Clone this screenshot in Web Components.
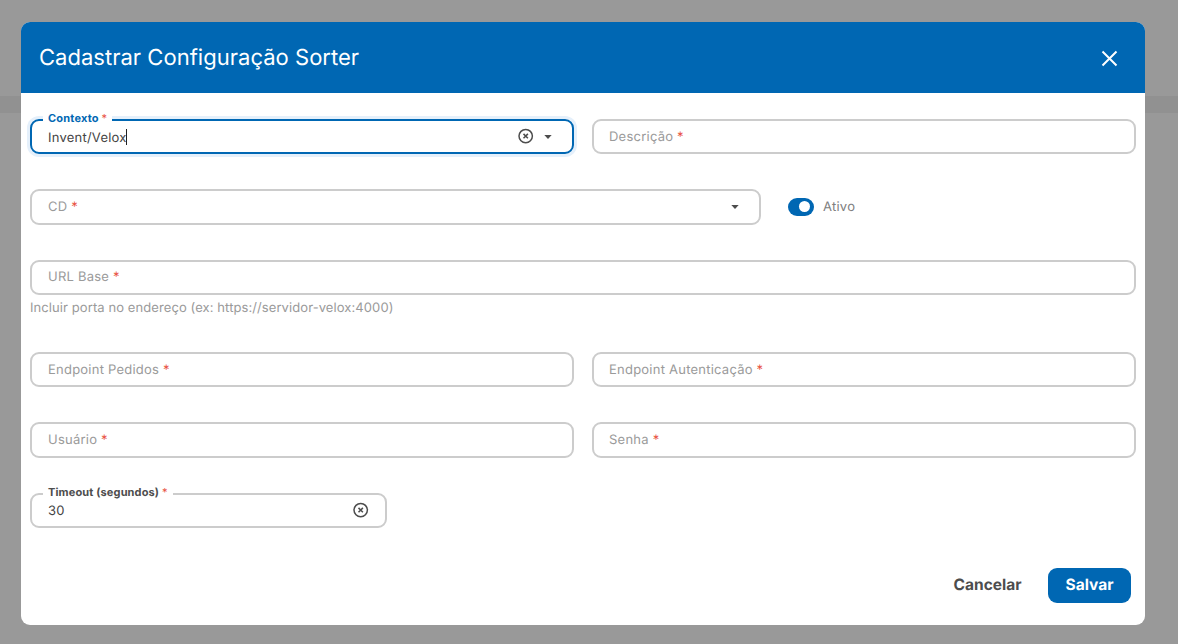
<!DOCTYPE html>
<html lang="pt-BR">
<head>
<meta charset="utf-8">
<title>Cadastrar Configuração Sorter</title>
<style>
html,body{margin:0;height:100%}
body{font-family:Inter,"Liberation Sans",sans-serif;text-rendering:geometricPrecision;background:linear-gradient(#999 96px,#919191 96px,#919191 113px,#999 113px);overflow:hidden}
.row{display:grid;grid-template-columns:544px 544px;column-gap:18px;align-items:start}
.row form-field:nth-child(2){--pl:15px}
.cd{grid-template-columns:731px auto;column-gap:27px}
.one{grid-template-columns:1106px}
.short{grid-template-columns:357px}
</style>
</head>
<body>
<sorter-dialog>
  <span slot="title">Cadastrar Configuração Sorter</span>
  <div class="row" style="height:70px">
    <form-field label="Contexto" value="Invent/Velox" focused clear select></form-field>
    <form-field label="Descrição"></form-field>
  </div>
  <div class="row cd" style="height:71px">
    <form-field label="CD" select style="--h:36px"></form-field>
    <toggle-switch>Ativo</toggle-switch>
  </div>
  <div class="row one" style="height:92px">
    <form-field label="URL Base" hint="Incluir porta no endereço (ex: https://servidor-velox:4000)" style="--dy:0px"></form-field>
  </div>
  <div class="row" style="height:70px">
    <form-field label="Endpoint Pedidos"></form-field>
    <form-field label="Endpoint Autenticação"></form-field>
  </div>
  <div class="row" style="height:71px">
    <form-field label="Usuário" style="--h:36px"></form-field>
    <form-field label="Senha" style="--h:36px"></form-field>
  </div>
  <div class="row short" style="height:75px">
    <form-field label="Timeout (segundos)" value="30" clear style="--dy:0px;--fls:.14px"></form-field>
  </div>
  <action-button slot="actions">Cancelar</action-button>
  <action-button slot="actions" primary>Salvar</action-button>
</sorter-dialog>
<script>
class SorterDialog extends HTMLElement{
  constructor(){super();this.attachShadow({mode:'open'}).innerHTML=`
<style>
:host{display:block;padding:22px 33px 19px 21px}
.dialog{height:603px;border-radius:9px;background:#fff;overflow:hidden}
header{height:71px;box-sizing:border-box;background:#0067b3;color:#fff;display:flex;align-items:center;justify-content:space-between;padding:0 27px 0 18px}
h1{margin:0;font-size:22px;font-weight:400;line-height:30px;letter-spacing:.02px;white-space:nowrap}
svg{display:block;margin-top:1px}
main{padding:26px 9px 0}
footer{display:flex;justify-content:flex-end;gap:9px;padding-right:14px}
</style>
<div class="dialog"><header><h1><slot name="title"></slot></h1>
<svg width="17" height="17" viewBox="0 0 17 17" stroke="#fff" stroke-width="2"><path d="M1.5 1.5 15.5 15.5M15.5 1.5 1.5 15.5"/></svg></header>
<main><slot></slot></main><footer><slot name="actions"></slot></footer></div>`}
}
class FormField extends HTMLElement{
  connectedCallback(){
    const a=n=>this.getAttribute(n),v=a('value'),f=this.hasAttribute('focused');
    this.attachShadow({mode:'open'}).innerHTML=`
<style>
:host{display:block;font-size:13px;letter-spacing:.23px;color:#9a9a9a}
.box{position:relative;box-sizing:border-box;height:var(--h,35px);border:2px solid #ccc;border-radius:9px;display:flex;align-items:center;padding:0 16px 0 var(--pl,16px)}
:host([focused]) .box{border-color:#0067b3;box-shadow:0 0 0 3px #e5f0fb}
.text{flex:1;display:flex;align-items:center;line-height:18px;white-space:pre;margin-top:-2px;transform:translateY(var(--dy,1px))}
.value{color:#444;margin:0}
b{color:#e8513f;font-weight:400}
.float{position:absolute;left:11px;top:-6px;height:12px;line-height:7px;padding:0 5px;background:#fff;font-size:11px;font-weight:700;color:#4d4d4d;letter-spacing:var(--fls,.2px);white-space:pre}
:host([focused]) .float{color:#0067b3}
.caret{width:1px;height:16px;background:#222;margin-left:-1px;transform:translateY(-1px)}
.arrow{margin:0 4px 0 10px}
.clear{margin-top:-1px}
.hint{line-height:18px;padding-top:4px;letter-spacing:.085px}
svg{display:block;flex:none}
</style>
<div class="box">${v?`<span class="float">${a('label')} <b>*</b></span><span class="text value">${v}${f?'<i class="caret"></i>':''}</span>`
:`<span class="text">${a('label')} <b>*</b></span>`}
${this.hasAttribute('clear')?'<svg class="clear" width="16" height="16" viewBox="0 0 16 16" fill="none" stroke="#4d4d4d" stroke-width="1.5"><circle cx="7.7" cy="8.1" r="6.7"/><path d="M5.5 5.9 9.9 10.3M9.9 5.9 5.5 10.3"/></svg>':''}
${this.hasAttribute('select')?'<svg class="arrow" width="8" height="4" viewBox="0 0 8 4"><path d="M.3 0H7.7L4 4Z" fill="#4d4d4d"/></svg>':''}
</div>${a('hint')?`<div class="hint">${a('hint')}</div>`:''}`}
}
class ToggleSwitch extends HTMLElement{
  constructor(){super();this.attachShadow({mode:'open'}).innerHTML=`
<style>
:host{display:flex;align-items:center;height:36px;gap:9px;font-size:13px;letter-spacing:.24px;color:#808080}
.track{box-sizing:border-box;width:26px;height:18px;border-radius:9px;background:#0067b3;display:flex;justify-content:flex-end;align-items:center;padding-right:4px}
.thumb{width:11px;height:11px;border-radius:50%;background:#fff;margin-top:-1px}
.label{margin-top:0;transform:translateY(-.1px)}
</style><span class="track"><span class="thumb"></span></span><span class="label"><slot></slot></span>`}
}
class ActionButton extends HTMLElement{
  constructor(){super();this.attachShadow({mode:'open'}).innerHTML=`
<style>
:host{display:block;height:35px;line-height:33px;padding:0 17.5px;border-radius:9px;font-size:15.5px;font-weight:700;color:#4d4d4d}
:host([primary]){background:#0067b3;color:#fff}
</style><slot></slot>`}
}
customElements.define('sorter-dialog',SorterDialog);
customElements.define('form-field',FormField);
customElements.define('toggle-switch',ToggleSwitch);
customElements.define('action-button',ActionButton);
</script>
</body>
</html>
